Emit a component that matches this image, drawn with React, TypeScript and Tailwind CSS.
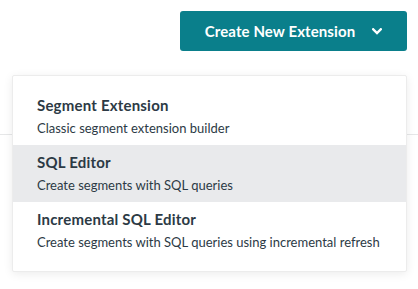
const items = [
  { title: 'Segment Extension', desc: 'Classic segment extension builder' },
  { title: 'SQL Editor', desc: 'Create segments with SQL queries', active: true },
  { title: 'Incremental SQL Editor', desc: 'Create segments with SQL queries using incremental refresh' },
]

export default function App() {
  return (
    <div
      className="relative w-[418px] h-[289px] overflow-hidden bg-white"
      style={{ fontFamily: 'Lato, "Open Sans", sans-serif' }}
    >
      {/* Header */}
      <div className="flex justify-end pt-[11px] pr-[11px]">
        <button className="flex h-[40px] w-[227px] items-center justify-center gap-[17px] rounded-[3px] bg-[#0a7f8b] text-[15px] font-bold tracking-[0.1px] text-white">
          <span>Create New Extension</span>
          <svg width="10" height="7" viewBox="0 0 10 7" fill="none">
            <path d="M1.2 1.3 L5 5 L8.8 1.3" stroke="white" strokeWidth="2.4" strokeLinecap="square" />
          </svg>
        </button>
      </div>

      <div className="mt-[83px] h-px bg-[#e6e7e8]" />

      {/* Dropdown menu */}
      <div className="absolute left-[12px] top-[75px] w-[395px] rounded-[2px] border border-[#ececec] bg-white py-[12px] shadow-[0_2px_10px_rgba(0,0,0,0.08)]">
        {items.map(item => (
          <div
            key={item.title}
            className={`h-[57px] px-[24px] pt-[7px] text-[#2c3a45] ${item.active ? 'bg-[#e9eaec]' : ''}`}
          >
            <div className="text-[15px] font-bold leading-[20px] tracking-[0.2px]">{item.title}</div>
            <div className="mt-[4px] text-[13px] leading-[18px]">{item.desc}</div>
          </div>
        ))}
      </div>
    </div>
  )
}
